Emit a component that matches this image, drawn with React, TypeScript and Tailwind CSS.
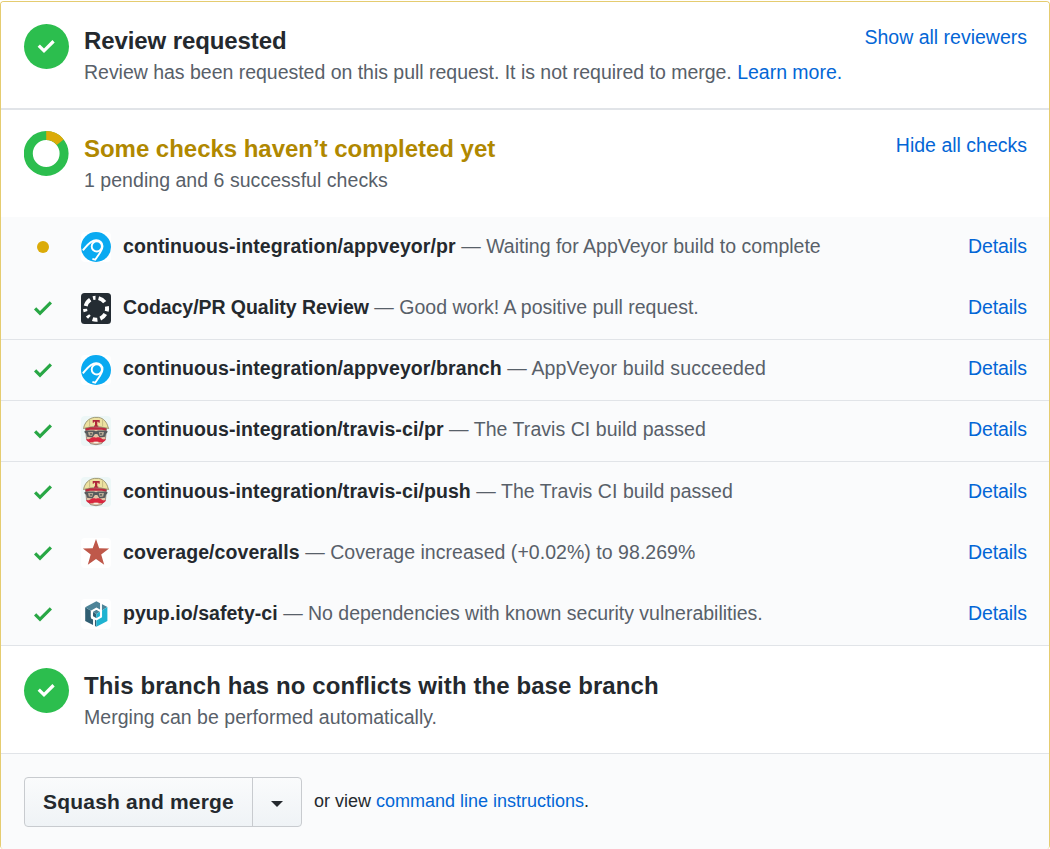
import type { ReactNode } from "react";

function CheckBadge() {
  return (
    <span className="flex size-[45px] shrink-0 items-center justify-center rounded-full bg-[#2cbe4e]">
      <svg viewBox="0 0 18 24" className="mr-px mb-0.5 h-6 w-[18px] fill-white" aria-hidden="true">
        <path d="M17.7 8.4L7 19 .6 12.8l2.3-2.3L7 14.4 15.4 6.1z" />
      </svg>
    </span>
  );
}

function ProgressRing() {
  return (
    <svg viewBox="0 0 45 45" className="size-[45px] shrink-0" aria-hidden="true">
      <circle cx="22.2" cy="22.5" r="17.9" fill="none" stroke="#2cbe4e" strokeWidth="9" />
      <path d="M22.2 4.6A17.9 17.9 0 0 1 36.2 11.3" fill="none" stroke="#dbab09" strokeWidth="9" />
    </svg>
  );
}

function CheckMark() {
  return (
    <svg viewBox="0 0 12 16" className="h-6 w-[18px] fill-[#28a745]" aria-hidden="true">
      <path d="M12 5l-8 8-4-4 1.5-1.5L4 10l6.5-6.5z" />
    </svg>
  );
}

function PendingDot() {
  return <span className="size-3 rounded-full bg-[#dbab09]" />;
}

function AppVeyorLogo() {
  return (
    <svg viewBox="0 0 30 30" className="size-[30px] rounded-[4px] bg-white" aria-hidden="true">
      <circle cx="15" cy="15" r="15" fill="#0aaaf1" />
      <g fill="none" stroke="#fff" strokeWidth="1.9">
        <circle cx="15.8" cy="14.4" r="5.1" />
        <path d="M1.8 18.4C5.5 14.5 8.8 8.6 15 8.3c3.8-.2 6.7 2.4 6.5 6-.2 3.3-1.9 5.7-3.7 8.2l-3.6 5.2-2.8-.8" />
      </g>
    </svg>
  );
}

function CodacyLogo() {
  return (
    <svg viewBox="0 0 30 31" className="h-[31px] w-[30px]" aria-hidden="true">
      <rect width="30" height="31" rx="3.5" fill="#242c33" />
      <g fill="none" stroke="#fff" strokeWidth="4">
        <path d="M17.6 5.1A11 11 0 0 1 23.7 9.1" />
        <path d="M25.9 13.4A11 11 0 0 1 25.7 18.3" />
        <path d="M24.3 21.1A11 11 0 0 1 19.3 25.6" />
        <path d="M16.4 26.7A11 11 0 0 1 11.6 26.2" />
        <path d="M8.4 24.3A11 11 0 0 1 6.6 22.3" />
        <path d="M4.6 18.6A11 11 0 0 1 4.1 15.8" />
        <path d="M4.7 13A11 11 0 0 1 9.2 6.6" />
        <path d="M12 5.1A11 11 0 0 1 14.5 4.8" />
      </g>
    </svg>
  );
}

function TravisLogo() {
  return (
    <svg viewBox="0 0 30 30" className="size-[30px] rounded-[4px] bg-[#edf7f7]" aria-hidden="true">
      <path d="M4.5 12.5h21l-1 10-4 5.2-5.5 1-5.5-1-4-5.2z" fill="#e2c3a5" stroke="#776a60" strokeWidth=".7" />
      <path d="M4.3 12.3l3.7-1.2 14 .2 3.7 1-.7 2.5-4-1H9l-4 1z" fill="#bd2940" />
      <path d="M2.7 11.6C3.8 6.8 7.2 2.2 13.5 1.4h4C22.8 2.2 26 6.5 27 11l.7 1.5-4.7-1c-5-1.2-12-1.2-16.5 0l-4 1z" fill="#ede2a1" stroke="#8c845d" strokeWidth=".8" />
      <path d="M8.6 3.6v6.4M21.6 3.6v6.4" stroke="#b8ae78" strokeWidth=".7" />
      <path d="M11.7 4h7v2.7h-1.2v-1h-1.2v3.7h1v1.3H13V9.4h1V5.7h-1.2v1h-1.1z" fill="#ae283b" />
      <path d="M3.3 15.2l2.7-.8h7l2 .8 2-.8h7l2.7.8-.7 1.8-1 .5-.9 3.2-5.5.8-2.3-3.6h-2.4l-2.3 3.6-5.5-.8-1-3.2-1.2-.5z" fill="#565b5d" />
      <path d="M7 15.9h5.3l-1.2 4-3.3-.4zM17.8 15.9H23l-.8 3.6-3.4.4z" fill="#b6aa95" />
      <circle cx="10" cy="17.8" r=".9" fill="#45494b" />
      <circle cx="20" cy="17.8" r=".9" fill="#45494b" />
      <path d="M15 21.7c2.5-.9 4.7-.2 6.2 1.2 1.5.8 3 .5 4-.1-.8 2.5-3 4-5.7 3.5-1.5-.3-2.8-.9-4.5-.9s-3 .6-4.5.9c-2.7.5-4.9-1-5.7-3.5 1.1.7 2.7.8 4 0 1.5-1.4 3.7-2 6.2-1.1z" fill="#d92740" />
      <path d="M12.5 26.3h5l-.8.8h-3.4z" fill="#fff" />
    </svg>
  );
}

function CoverallsLogo() {
  return (
    <svg viewBox="0 0 30 30" className="size-[30px] rounded-[4px] bg-white" aria-hidden="true">
      <path d="M15 1l3.2 9.3 9.9.1-7.9 6.2 3 10.2-8.2-5.9-8.2 5.9 2.9-10.2-7.8-6.2 9.8-.1z" fill="#bf584a" />
    </svg>
  );
}

function PyupLogo() {
  return (
    <svg viewBox="0 0 30 30" className="size-[30px] rounded-[4px] bg-white" aria-hidden="true">
      <path d="M4.2 8.2L15.4 15v12.8L4.2 22z" fill="#315f73" />
      <path d="M4.2 8.2L15.4 2.2l11 5.8-11 7z" fill="#4e8498" />
      <path d="M26.4 8v14l-11 5.8V15z" fill="#1fb3d1" />
      <path d="M15.4 9.7l4.6 2.6v5.4l-4.6 2.6-4.6-2.6v-5.4z" fill="none" stroke="#fff" strokeWidth="2.1" />
      <path d="M20 17.5V3.5M11 12.5V19l2 1v7.5" fill="none" stroke="#fff" strokeWidth="1.9" />
    </svg>
  );
}

interface Check {
  name: string;
  message: string;
  logo: ReactNode;
  pending?: boolean;
  rowClass: string;
  nameClass: string;
  messageClass: string;
  textClass: string;
}

const checks: Check[] = [
  { name: "continuous-integration/appveyor/pr", message: "Waiting for AppVeyor build to complete", logo: <AppVeyorLogo />, pending: true, rowClass: "h-[61px]", nameClass: "tracking-[0.1px]", messageClass: "tracking-[0.01px]", textClass: "pt-[15px]" },
  { name: "Codacy/PR Quality Review", message: "Good work! A positive pull request.", logo: <CodacyLogo />, rowClass: "h-[62px] border-b", nameClass: "tracking-[-0.05px]", messageClass: "tracking-[0.01px]", textClass: "pt-[15px]" },
  { name: "continuous-integration/appveyor/branch", message: "AppVeyor build succeeded", logo: <AppVeyorLogo />, rowClass: "h-[61px] border-b", nameClass: "tracking-[0.1px]", messageClass: "tracking-[0.15px]", textClass: "pt-[14px]" },
  { name: "continuous-integration/travis-ci/pr", message: "The Travis CI build passed", logo: <TravisLogo />, rowClass: "h-[61px] border-b", nameClass: "tracking-[0.09px]", messageClass: "tracking-[0.05px]", textClass: "pt-[14px]" },
  { name: "continuous-integration/travis-ci/push", message: "The Travis CI build passed", logo: <TravisLogo />, rowClass: "h-[61px]", nameClass: "tracking-[0.09px]", messageClass: "tracking-[0.04px]", textClass: "pt-[15px]" },
  { name: "coverage/coveralls", message: "Coverage increased (+0.02%) to 98.269%", logo: <CoverallsLogo />, rowClass: "h-[61px]", nameClass: "tracking-[0.06px]", messageClass: "tracking-[0.04px]", textClass: "pt-[15px]" },
  { name: "pyup.io/safety-ci", message: "No dependencies with known security vulnerabilities.", logo: <PyupLogo />, rowClass: "h-[62px] border-b", nameClass: "tracking-[0.05px]", messageClass: "tracking-[-0.01px]", textClass: "pt-[15px]" },
];

function CheckRow({ check }: { check: Check }) {
  return (
    <li className={`flex items-start border-[#e1e4e8] bg-[#fafbfc] pr-[22px] pl-[33px] ${check.rowClass}`}>
      <span className="mt-[18px] flex h-6 w-[18px] shrink-0 items-center justify-center">
        {check.pending ? <PendingDot /> : <CheckMark />}
      </span>
      <span className="mt-[15px] ml-[29px] shrink-0">{check.logo}</span>
      <p className={`ml-3 flex-1 whitespace-nowrap leading-[29px] text-[#586069] ${check.textClass}`}>
        <strong className={`font-bold text-[#24292e] ${check.nameClass}`}>{check.name}</strong>
        <span className={check.messageClass}> — {check.message}</span>
      </p>
      <a href="#details" className={`leading-[29px] tracking-[-0.08px] text-[#0366d6] ${check.textClass}`}>Details</a>
    </li>
  );
}

interface StatusProps {
  icon: ReactNode;
  title: string;
  titleClass: string;
  textClass: string;
  action?: string;
  actionClass?: string;
  className: string;
  children: ReactNode;
}

function StatusSection({ icon, title, titleClass, textClass, action, actionClass = "", className, children }: StatusProps) {
  return (
    <section className={`flex items-start border-[#e1e4e8] bg-white pr-[22px] pl-[23px] ${className}`}>
      {icon}
      <div className="ml-[15px] flex-1 whitespace-nowrap">
        <h2 className={`text-[24px] font-bold ${titleClass}`}>{title}</h2>
        <p className={`leading-[29px] text-[#586069] ${textClass}`}>{children}</p>
      </div>
      {action && <a href="#toggle" className={`text-[#0366d6] ${actionClass}`}>{action}</a>}
    </section>
  );
}

export default function App() {
  return (
    <div className="flex h-[849px] w-[1050px] bg-white pt-px font-['Liberation_Sans',Arial,sans-serif] text-[19.5px] text-[#24292e]">
      <main className="flex w-full flex-col overflow-hidden rounded-[4px] border border-b-0 border-[#e5cc70]">
        <StatusSection icon={<CheckBadge />} title="Review requested" titleClass="leading-[34px] tracking-[-0.1px] text-[#24292e]" textClass="tracking-[-0.02px]" action="Show all reviewers" actionClass="leading-[27px]" className="h-[108px] border-b-2 pt-[22px]">
          Review has been requested on this pull request. It is not required to merge.{" "}
          <a href="#learn" className="text-[#0366d6]">Learn more.</a>
        </StatusSection>
        <StatusSection icon={<ProgressRing />} title="Some checks haven’t completed yet" titleClass="leading-[35px] tracking-[-0.03px] text-[#b08800]" textClass="tracking-[0.04px]" action="Hide all checks" actionClass="leading-[29px]" className="h-[107px] pt-[21px]">
          1 pending and 6 successful checks
        </StatusSection>
        <ul>
          {checks.map((check) => <CheckRow key={check.name} check={check} />)}
        </ul>
        <StatusSection icon={<CheckBadge />} title="This branch has no conflicts with the base branch" titleClass="leading-[35px] tracking-[0.08px] text-[#24292e]" textClass="tracking-[0.03px]" className="h-[108px] border-b pt-[22px]">
          Merging can be performed automatically.
        </StatusSection>
        <footer className="flex flex-1 items-start bg-[#fafbfc] pt-[23px] pl-[23px]">
          <div className="flex h-[50px] w-[278px] rounded-[4px] border border-[#c8cbcf] bg-linear-to-b from-[#fafbfc] to-[#eff3f6]">
            <button className="w-[228px] border-r border-[#c8cbcf] text-[21px] font-bold tracking-[0.19px] whitespace-nowrap">Squash and merge</button>
            <button className="flex flex-1 items-center justify-center pt-[3px]" aria-label="Select merge method">
              <svg viewBox="0 0 12 6" className="h-1.5 w-3 fill-[#24292e]" aria-hidden="true"><path d="M0 0h12L6 6z" /></svg>
            </button>
          </div>
          <p className="ml-3 text-[18px] leading-[48px] whitespace-nowrap">
            or view <a href="#instructions" className="text-[#0366d6]">command line instructions</a>.
          </p>
        </footer>
      </main>
    </div>
  );
}
